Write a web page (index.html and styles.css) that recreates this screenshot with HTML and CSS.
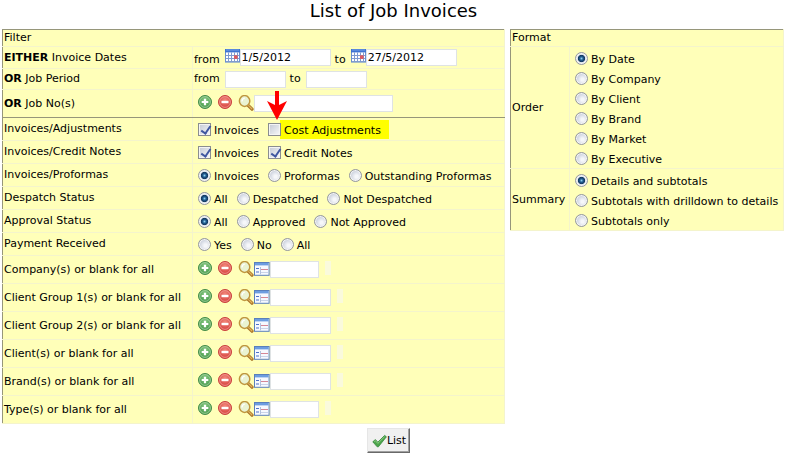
FILE: index.html
```html
<!DOCTYPE html>
<html lang="en">
<head>
  <meta charset="UTF-8">
  <title>List of Job Invoices</title>
  <meta name="viewport" content="width=device-width, initial-scale=1.0">
  <link rel="stylesheet" href="styles.css">
</head>
<body>

  <!-- icon set -->
  <svg class="sprite" aria-hidden="true">
    <defs>
      <radialGradient id="greenFill" cx="0.5" cy="0.35" r="0.65">
        <stop offset="0" stop-color="#8ccb86"/>
        <stop offset="1" stop-color="#3f9446"/>
      </radialGradient>
      <radialGradient id="redFill" cx="0.5" cy="0.35" r="0.65">
        <stop offset="0" stop-color="#f28a7c"/>
        <stop offset="1" stop-color="#d33a38"/>
      </radialGradient>
    </defs>
    <symbol id="add" viewBox="0 0 14 14">
      <circle cx="7" cy="7" r="6.5" fill="url(#greenFill)" stroke="#438c48"/>
      <circle cx="7" cy="7" r="5.4" fill="none" stroke="#b5dcae" stroke-width="0.7"/>
      <path d="M7 3.7v6.6M3.7 7h6.6" stroke="#fff" stroke-width="2.2"/>
    </symbol>
    <symbol id="remove" viewBox="0 0 14 14">
      <circle cx="7" cy="7" r="6.5" fill="url(#redFill)" stroke="#c9403d"/>
      <circle cx="7" cy="7" r="5.4" fill="none" stroke="#f5aaa0" stroke-width="0.7"/>
      <path d="M3.5 7h7" stroke="#fff" stroke-width="2.4"/>
    </symbol>
    <symbol id="search" viewBox="0 0 16 16">
      <path d="M9.6 9.8l4.4 4.4" stroke="#a97428" stroke-width="3.2" stroke-linecap="round"/>
      <path d="M10.4 10.4l3.4 3.4" stroke="#e0b35e" stroke-width="1.3" stroke-linecap="round"/>
      <ellipse cx="6.6" cy="6" rx="5.2" ry="5.4" fill="#eaf3d2" stroke="#bf963f" stroke-width="1.5"/>
      <path d="M4 6.5c0-2 1-3.2 2.8-3.4" stroke="#fff" stroke-width="1.2" fill="none"/>
    </symbol>
    <symbol id="list" viewBox="0 0 16 14">
      <rect x="0.5" y="0.5" width="14.6" height="12.8" fill="#f6f9ff" stroke="#5a80bb"/>
      <rect x="1" y="1" width="13.6" height="2.4" fill="#6c9de0"/>
      <path d="M2 6.5h3M2 10h3" stroke="#4d72c9" stroke-width="1.2"/>
      <path d="M6.5 5v7.4" stroke="#b3c2dd"/>
      <path d="M7 7.5h7" stroke="#d58796"/>
      <path d="M7 10.5h7" stroke="#c9d3e8"/>
    </symbol>
    <symbol id="calendar" viewBox="0 0 15 14">
      <rect x="0.5" y="0.5" width="14" height="12.6" fill="#fff" stroke="#6b8fd0"/>
      <rect x="0" y="0" width="15" height="3.4" fill="#3e74d2"/>
      <path d="M1 1h13" stroke="#85aceb" stroke-width="0.8"/>
      <path d="M3.5 3.4v9.6M6.5 3.4v9.6M9.5 3.4v9.6M12.5 3.4v9.6M1 6.5h13M1 9.5h13M1 12.5h13" stroke="#7f9bd0"/>
      <rect x="9" y="6.3" width="3.6" height="3.6" fill="#dc5a5f"/>
    </symbol>
    <symbol id="tick" viewBox="0 0 15 14">
      <path d="M0.8 7.8l2.6-2.2 2.4 2.6L12.6 1.4l1.8 1.4L6.4 12.8H5.2z" fill="#4ba54b" stroke="#34863a" stroke-width="0.8"/>
      <path d="M2.2 7.6l1.2-.9 2.4 2.7 6.8-6.7" fill="none" stroke="#92d088" stroke-width="0.9"/>
    </symbol>
  </svg>

  <h1>List of Job Invoices</h1>

  <form onsubmit="return false">
    <div class="panels">
      <table class="panel filter">
        <tr class="head"><th colspan="2">Filter</th></tr>
        <tr class="dates">
          <th><b>EITHER</b> Invoice Dates</th>
          <td>
            <div class="fields">
              <label for="dateFrom">from</label>
              <button type="button" class="icon calendar" aria-label="Pick start date"><svg><use href="#calendar"/></svg></button>
              <input type="text" class="date" id="dateFrom" value="1/5/2012">
              <label for="dateTo">to</label>
              <button type="button" class="icon calendar" aria-label="Pick end date"><svg><use href="#calendar"/></svg></button>
              <input type="text" class="date" id="dateTo" value="27/5/2012">
            </div>
          </td>
        </tr>
        <tr class="period">
          <th><b>OR</b> Job Period</th>
          <td>
            <div class="fields">
              <label for="periodFrom">from</label>
              <input type="text" class="medium" id="periodFrom">
              <label for="periodTo">to</label>
              <input type="text" class="medium" id="periodTo">
            </div>
          </td>
        </tr>
        <tr class="jobs">
          <th><label for="jobNo"><b>OR</b> Job No(s)</label></th>
          <td>
            <div class="picker">
              <button type="button" class="icon" aria-label="Add"><svg><use href="#add"/></svg></button>
              <button type="button" class="icon" aria-label="Remove"><svg><use href="#remove"/></svg></button>
              <button type="button" class="icon wide" aria-label="Search"><svg><use href="#search"/></svg></button>
              <input type="text" class="long" id="jobNo">
            </div>
          </td>
        </tr>
        <tr class="choice">
          <th>Invoices/Adjustments</th>
          <td>
            <div class="options">
              <label><input type="checkbox" checked><span>Invoices</span></label>
              <label class="marked">
                <input type="checkbox"><span>Cost Adjustments</span>
                <svg class="arrow" viewBox="0 0 20 29"><path d="M8 0h4v14l8-4-10 19L0 10l8 4z" fill="#f00"/></svg>
              </label>
            </div>
          </td>
        </tr>
        <tr class="choice">
          <th>Invoices/Credit Notes</th>
          <td>
            <div class="options">
              <label><input type="checkbox" checked><span>Invoices</span></label>
              <label><input type="checkbox" checked><span>Credit Notes</span></label>
            </div>
          </td>
        </tr>
        <tr class="choice">
          <th>Invoices/Proformas</th>
          <td>
            <div class="options">
              <label><input type="radio" name="proforma" checked><span>Invoices</span></label>
              <label><input type="radio" name="proforma"><span>Proformas</span></label>
              <label><input type="radio" name="proforma"><span>Outstanding Proformas</span></label>
            </div>
          </td>
        </tr>
        <tr class="choice">
          <th>Despatch Status</th>
          <td>
            <div class="options">
              <label><input type="radio" name="despatch" checked><span>All</span></label>
              <label><input type="radio" name="despatch"><span>Despatched</span></label>
              <label><input type="radio" name="despatch"><span>Not Despatched</span></label>
            </div>
          </td>
        </tr>
        <tr class="choice">
          <th>Approval Status</th>
          <td>
            <div class="options">
              <label><input type="radio" name="approval" checked><span>All</span></label>
              <label><input type="radio" name="approval"><span>Approved</span></label>
              <label><input type="radio" name="approval"><span>Not Approved</span></label>
            </div>
          </td>
        </tr>
        <tr class="choice">
          <th>Payment Received</th>
          <td>
            <div class="options">
              <label><input type="radio" name="payment"><span>Yes</span></label>
              <label><input type="radio" name="payment"><span>No</span></label>
              <label><input type="radio" name="payment"><span>All</span></label>
            </div>
          </td>
        </tr>
        <tr class="lookup">
          <th><label for="company">Company(s) or blank for all</label></th>
          <td>
            <div class="picker">
              <button type="button" class="icon" aria-label="Add"><svg><use href="#add"/></svg></button>
              <button type="button" class="icon" aria-label="Remove"><svg><use href="#remove"/></svg></button>
              <button type="button" class="icon wide" aria-label="Search"><svg><use href="#search"/></svg></button>
              <button type="button" class="icon wide" aria-label="List"><svg><use href="#list"/></svg></button>
              <input type="text" class="short" id="company"><span class="result"></span>
            </div>
          </td>
        </tr>
        <tr class="lookup">
          <th><label for="group1">Client Group 1(s) or blank for all</label></th>
          <td>
            <div class="picker">
              <button type="button" class="icon" aria-label="Add"><svg><use href="#add"/></svg></button>
              <button type="button" class="icon" aria-label="Remove"><svg><use href="#remove"/></svg></button>
              <button type="button" class="icon wide" aria-label="Search"><svg><use href="#search"/></svg></button>
              <button type="button" class="icon wide" aria-label="List"><svg><use href="#list"/></svg></button>
              <input type="text" class="medium" id="group1"><span class="result"></span>
            </div>
          </td>
        </tr>
        <tr class="lookup">
          <th><label for="group2">Client Group 2(s) or blank for all</label></th>
          <td>
            <div class="picker">
              <button type="button" class="icon" aria-label="Add"><svg><use href="#add"/></svg></button>
              <button type="button" class="icon" aria-label="Remove"><svg><use href="#remove"/></svg></button>
              <button type="button" class="icon wide" aria-label="Search"><svg><use href="#search"/></svg></button>
              <button type="button" class="icon wide" aria-label="List"><svg><use href="#list"/></svg></button>
              <input type="text" class="medium" id="group2"><span class="result"></span>
            </div>
          </td>
        </tr>
        <tr class="lookup">
          <th><label for="client">Client(s) or blank for all</label></th>
          <td>
            <div class="picker">
              <button type="button" class="icon" aria-label="Add"><svg><use href="#add"/></svg></button>
              <button type="button" class="icon" aria-label="Remove"><svg><use href="#remove"/></svg></button>
              <button type="button" class="icon wide" aria-label="Search"><svg><use href="#search"/></svg></button>
              <button type="button" class="icon wide" aria-label="List"><svg><use href="#list"/></svg></button>
              <input type="text" class="medium" id="client"><span class="result"></span>
            </div>
          </td>
        </tr>
        <tr class="lookup">
          <th><label for="brand">Brand(s) or blank for all</label></th>
          <td>
            <div class="picker">
              <button type="button" class="icon" aria-label="Add"><svg><use href="#add"/></svg></button>
              <button type="button" class="icon" aria-label="Remove"><svg><use href="#remove"/></svg></button>
              <button type="button" class="icon wide" aria-label="Search"><svg><use href="#search"/></svg></button>
              <button type="button" class="icon wide" aria-label="List"><svg><use href="#list"/></svg></button>
              <input type="text" class="medium" id="brand"><span class="result"></span>
            </div>
          </td>
        </tr>
        <tr class="lookup">
          <th><label for="type">Type(s) or blank for all</label></th>
          <td>
            <div class="picker">
              <button type="button" class="icon" aria-label="Add"><svg><use href="#add"/></svg></button>
              <button type="button" class="icon" aria-label="Remove"><svg><use href="#remove"/></svg></button>
              <button type="button" class="icon wide" aria-label="Search"><svg><use href="#search"/></svg></button>
              <button type="button" class="icon wide" aria-label="List"><svg><use href="#list"/></svg></button>
              <input type="text" class="short" id="type"><span class="result"></span>
            </div>
          </td>
        </tr>
      </table>

      <table class="panel format">
        <tr class="head"><th colspan="2">Format</th></tr>
        <tr>
          <th>Order</th>
          <td>
            <div class="options stacked">
              <label><input type="radio" name="order" checked><span>By Date</span></label>
              <label><input type="radio" name="order"><span>By Company</span></label>
              <label><input type="radio" name="order"><span>By Client</span></label>
              <label><input type="radio" name="order"><span>By Brand</span></label>
              <label><input type="radio" name="order"><span>By Market</span></label>
              <label><input type="radio" name="order"><span>By Executive</span></label>
            </div>
          </td>
        </tr>
        <tr>
          <th>Summary</th>
          <td>
            <div class="options stacked">
              <label><input type="radio" name="summary" checked><span>Details and subtotals</span></label>
              <label><input type="radio" name="summary"><span>Subtotals with drilldown to details</span></label>
              <label><input type="radio" name="summary"><span>Subtotals only</span></label>
            </div>
          </td>
        </tr>
      </table>
    </div>

    <div class="actions">
      <button type="submit" class="submit"><svg><use href="#tick"/></svg>List</button>
    </div>
  </form>

</body>
</html>
```
FILE: styles.css
```css
* {
  box-sizing: border-box;
}

body {
  margin: 0;
  padding: 0 2px;
  background: #fff;
  color: #000;
  font-family: Verdana, "DejaVu Sans", sans-serif;
  font-size: 11px;
  line-height: 14px;
}

.sprite {
  position: absolute;
  width: 0;
  height: 0;
}

h1 {
  margin: 0;
  height: 29px;
  font-size: 18px;
  font-weight: normal;
  line-height: 22px;
  text-align: center;
}

.panels {
  display: flex;
  align-items: flex-start;
  gap: 5px;
}

.panel {
  border-collapse: collapse;
  background: #ffffb9;
  border: 1px solid #e9e9d4;
  border-top-color: #96967a;
  border-left-color: #96967a;
  white-space: nowrap;
}

.filter {
  flex: 1;
}

.format {
  width: 274px;
  margin-right: 1px;
}

.panel th,
.panel td {
  padding: 0 1px;
  border: 1px solid #f4f4cc;
  font-weight: normal;
  text-align: left;
}

.panel th:first-child {
  border-left-color: #96967a;
}

.panel .head th {
  height: 17px;
  border-top-color: #96967a;
}

.filter th {
  width: 190px;
}

.format tr:not(.head) th {
  width: 59px;
}

/* row heights */
.dates td { height: 22px; }
.period td { height: 21px; }
.jobs td { height: 28px; }
.choice td { height: 23px; }
.lookup td { height: 28px; }

.panel .jobs th,
.panel .jobs td {
  border-bottom-color: #96967a;
}

.fields,
.picker,
.options,
.options label {
  display: flex;
  align-items: center;
}

.fields label {
  margin-right: 5px;
}

.fields input + label {
  margin-left: 4px;
}

.dates .fields {
  align-items: flex-start;
}

.dates label {
  padding-top: 4px;
}

.picker {
  align-items: flex-start;
  padding-left: 4px;
}

input[type="text"] {
  height: 17px;
  margin: 0;
  padding: 0 1px;
  border: 1px solid #dfe3e4;
  background: #fff;
  color: #000;
  font: inherit;
}

.date { width: 91px; }
.short { width: 49px; }
.medium { width: 61px; }
.long { width: 139px; }

.icon {
  width: 14px;
  height: 14px;
  margin: 0 6px 0 0;
  padding: 0;
  border: 0;
  background: none;
  cursor: pointer;
}

.icon svg {
  display: block;
  width: 100%;
  height: 100%;
}

.icon.wide {
  width: 16px;
  height: 16px;
  margin: 0;
}

.icon.calendar {
  width: 15px;
  margin: 0;
}

.result {
  width: 6px;
  height: 14px;
  margin-left: 6px;
  background: #fafadc;
}

.options {
  gap: 9px;
  padding-left: 4px;
}

.options label {
  position: relative;
  height: 19px;
  gap: 3px;
}

.options span {
  padding-top: 3px;
}

.options.stacked {
  flex-direction: column;
  align-items: flex-start;
  gap: 0;
  padding-top: 1px;
}

.options.stacked label {
  height: 20px;
}

.options input {
  appearance: none;
  flex: none;
  width: 13px;
  height: 13px;
  margin: 0;
}

input[type="radio"] {
  border: 1px solid #96999e;
  border-radius: 50%;
  background: radial-gradient(circle at 60% 60%, #f6f7fa 15%, #c8cedb 70%);
  box-shadow: inset 0 0 0 1px #f4f4f4;
}

input[type="radio"]:checked {
  background: radial-gradient(circle at 50% 50%, #8fd0ee 0, #1f5c91 22%, #15395f 42%, #dfe6ee 52%);
}

input[type="checkbox"] {
  border: 1px solid #8a8d90;
  background: linear-gradient(135deg, #c3c9d4, #f8f9fa);
  box-shadow: inset 0 0 0 1px #f4f4f4;
}

input[type="checkbox"]:checked::after {
  content: "";
  display: block;
  width: 4px;
  height: 8px;
  margin: 0 0 0 4px;
  border: solid #3f57a0;
  border-width: 0 2px 2px 0;
  transform: rotate(35deg);
}

.marked {
  background: linear-gradient(#ff0, #ff0) no-repeat 12px 0;
  padding-right: 8px;
}

/* pointer above the new option */
.arrow {
  position: absolute;
  left: -1px;
  bottom: 19px;
  width: 20px;
  height: 29px;
}

.actions {
  padding: 4px 10px 0 0;
  text-align: center;
}

.submit {
  display: inline-flex;
  align-items: center;
  height: 25px;
  padding: 0 3px 0 4px;
  border: 1px solid;
  border-color: #e6e6e6 #696969 #696969 #e6e6e6;
  box-shadow: inset -1px -1px #a0a0a0;
  background: #f0f0f0;
  color: #000;
  font: inherit;
}

.submit svg {
  width: 15px;
  height: 14px;
}
```
